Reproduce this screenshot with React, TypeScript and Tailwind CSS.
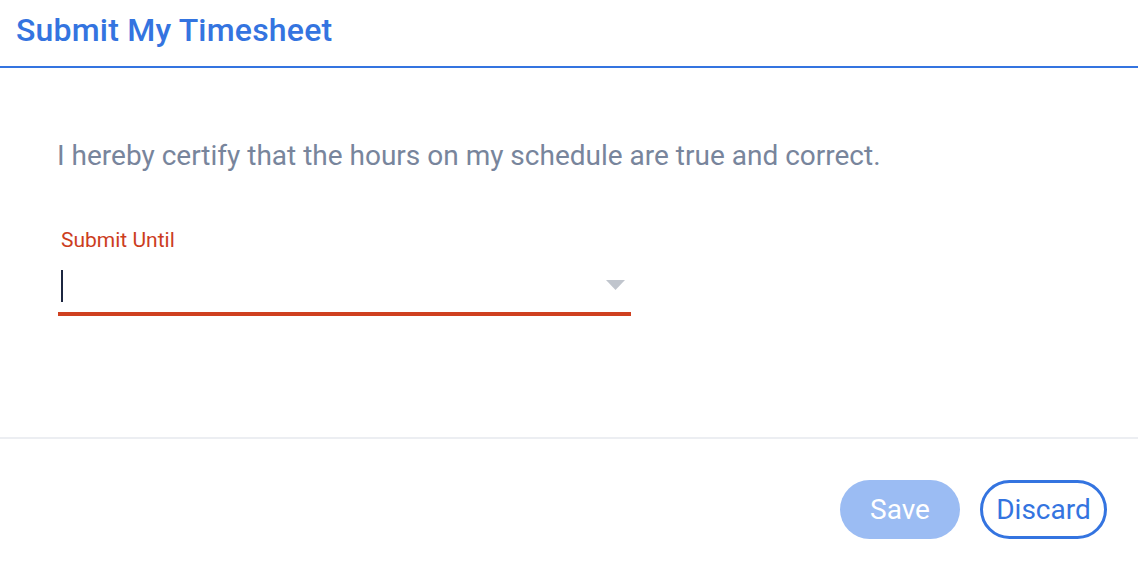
export default function App() {
  return (
    <div className="w-[1138px] h-[578px] bg-white flex flex-col" style={{ fontFamily: 'Roboto, "Liberation Sans", sans-serif' }}>
      <div className="h-[68px] border-b-2 border-[#3474e0] px-4 flex items-center">
        <h1 className="text-[32px] font-medium text-[#3474e0] leading-none -mt-[7px] tracking-[0.2px]">Submit My Timesheet</h1>
      </div>

      <div className="h-[371px] border-b-2 border-[#eceef2] pl-[57px] pt-[72px]">
        <p className="text-[28px] text-[#78859c] leading-[32px]">I hereby certify that the hours on my schedule are true and correct.</p>

        <div className="w-[573px] mt-[56px] ml-[1px]">
          <label className="block text-[21px] text-[#cc3d1e] leading-[24px] pl-[3px]">Submit Until</label>
          <div className="relative h-[64px] border-b-4 border-[#cf4020]">
            <span className="absolute left-[3px] top-[18px] w-[2px] h-[32px] bg-[#1c2640]" />
            <svg className="absolute right-[6px] top-[28px]" width="19" height="10" viewBox="0 0 19 10">
              <path d="M0 0 H19 L9.5 10 Z" fill="#c0c5cd" />
            </svg>
          </div>
        </div>
      </div>

      <div className="flex justify-end items-start gap-5 pt-[41px] pr-[31px]">
        <button className="w-[120px] h-[59px] rounded-full bg-[#9bbcf3] text-white text-[28px]">Save</button>
        <button className="w-[127px] h-[59px] rounded-full border-[3px] border-[#3474e0] text-[#3474e0] text-[28px]">Discard</button>
      </div>
    </div>
  );
}
